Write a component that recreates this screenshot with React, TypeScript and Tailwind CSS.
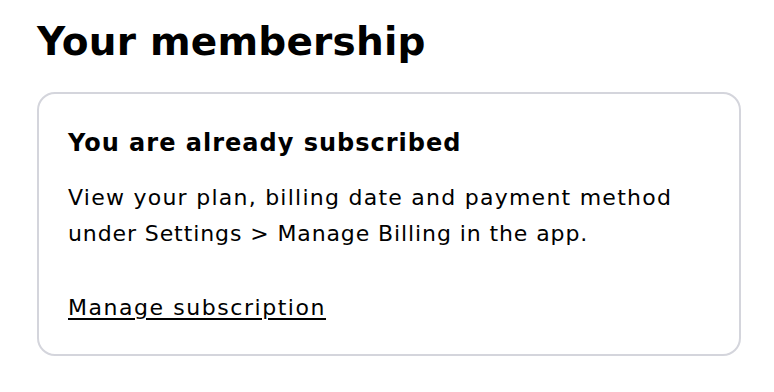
export default function App() {
  return (
    <div className="min-h-screen bg-white px-[37px] pt-[18px] font-['DejaVu_Sans',sans-serif] text-black">
      <h1 className="text-[39px] font-bold leading-[48px] tracking-[0.2px]">Your membership</h1>
      <div className="mt-[26px] w-[704px] rounded-[18px] border-2 border-[#d4d5dc] px-[29px] pt-[33px] pb-[28px]">
        <h2 className="text-[24px] font-bold leading-[32px] tracking-[1px]">You are already subscribed</h2>
        <p className="mt-[21px] text-[22px] leading-[36px]">
          <span className="block tracking-[1.25px]">View your plan, billing date and payment method</span>
          <span className="block tracking-[0.9px]">under Settings &gt; Manage Billing in the app.</span>
        </p>
        <a
          href="#"
          className="mt-[38px] block w-fit text-[22px] leading-[36px] tracking-[1.55px] underline underline-offset-[3px]"
        >
          Manage subscription
        </a>
      </div>
    </div>
  );
}
